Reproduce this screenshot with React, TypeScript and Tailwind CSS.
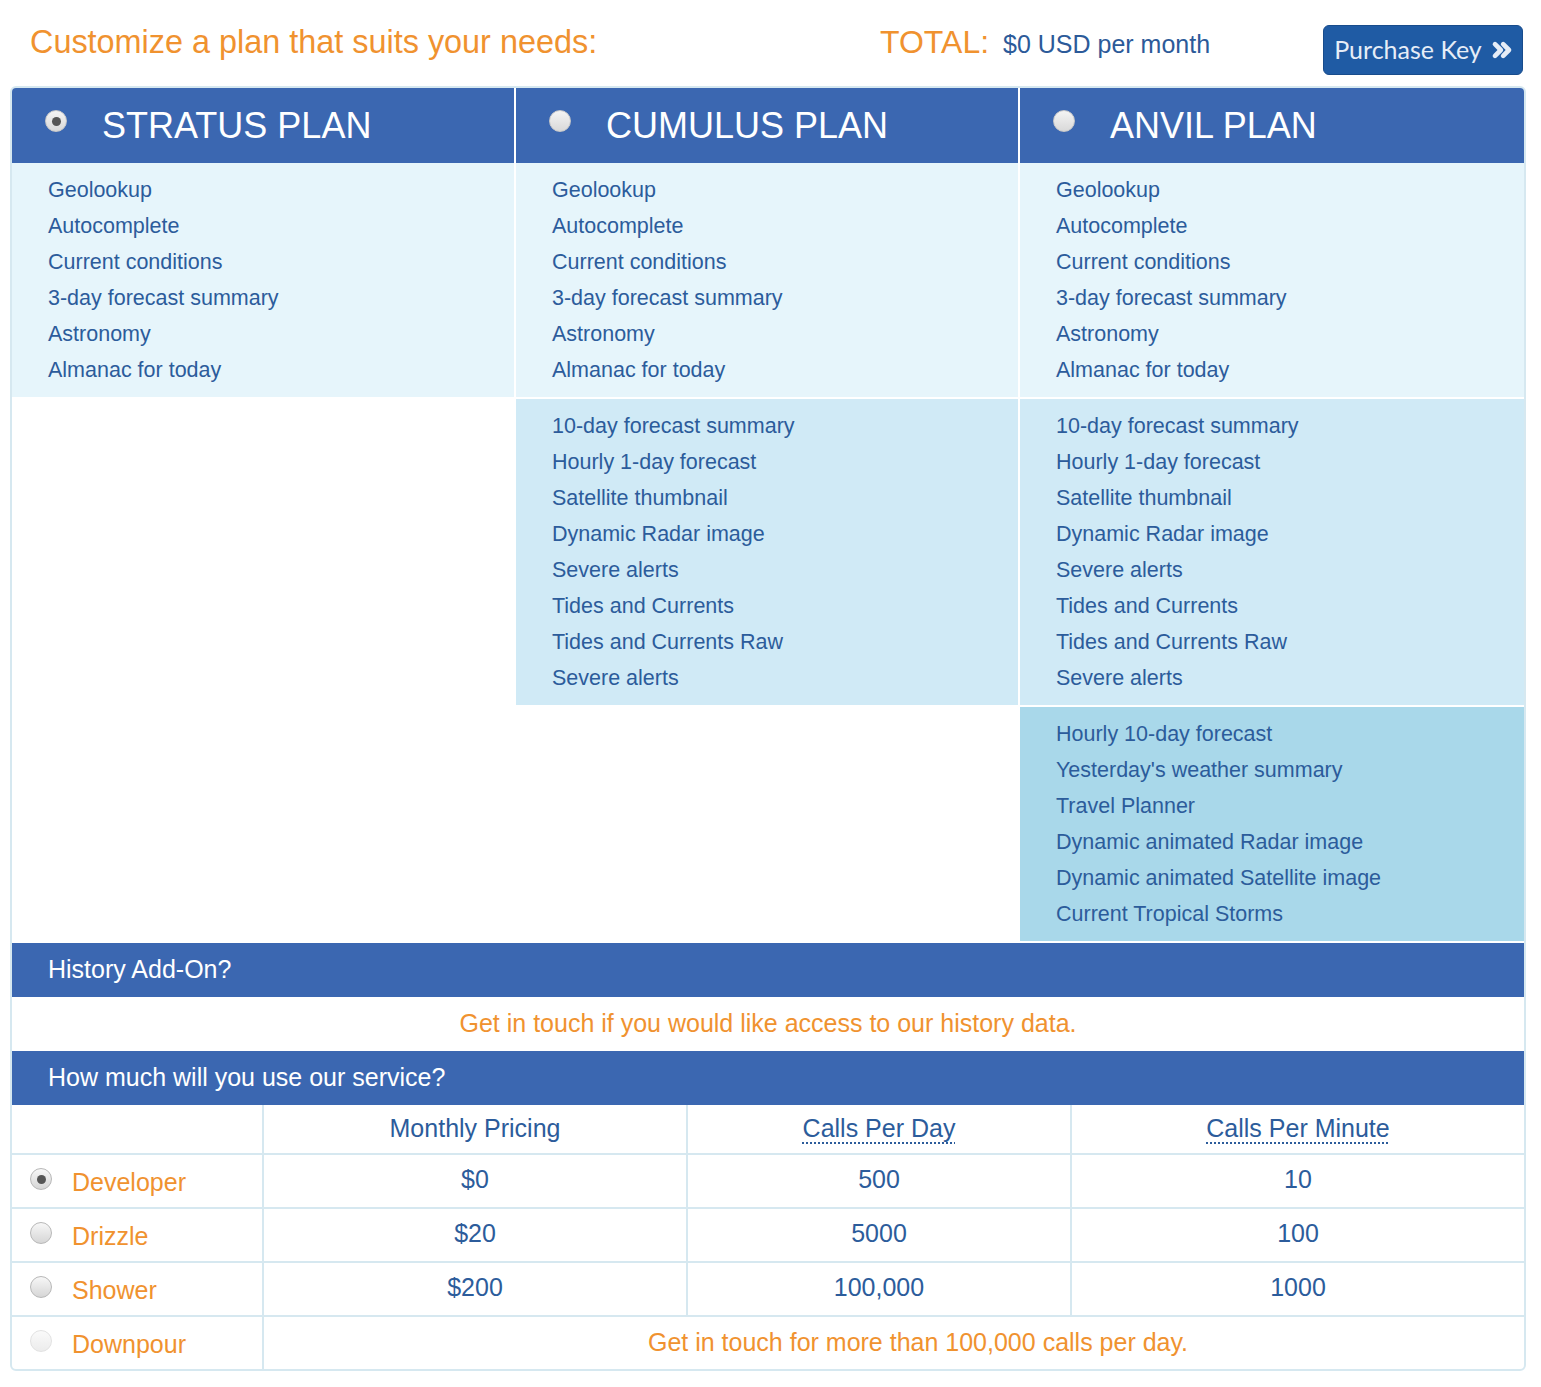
import { ChevronsRight } from 'lucide-react'

const basic = ['Geolookup', 'Autocomplete', 'Current conditions', '3-day forecast summary', 'Astronomy', 'Almanac for today']
const extra = [
    '10-day forecast summary',
    'Hourly 1-day forecast',
    'Satellite thumbnail',
    'Dynamic Radar image',
    'Severe alerts',
    'Tides and Currents',
    'Tides and Currents Raw',
    'Severe alerts',
]
const premium = [
    'Hourly 10-day forecast',
    "Yesterday's weather summary",
    'Travel Planner',
    'Dynamic animated Radar image',
    'Dynamic animated Satellite image',
    'Current Tropical Storms',
]

const plans = [
    { name: 'STRATUS PLAN', checked: true, sections: [basic] },
    { name: 'CUMULUS PLAN', checked: false, sections: [basic, extra] },
    { name: 'ANVIL PLAN', checked: false, sections: [basic, extra, premium] },
]

const sectionBg = ['bg-[#e6f5fb]', 'bg-[#d0eaf6]', 'bg-[#a9d8ea]']

const tiers = [
    { name: 'Developer', price: '$0', day: '500', minute: '10', checked: true },
    { name: 'Drizzle', price: '$20', day: '5000', minute: '100', checked: false },
    { name: 'Shower', price: '$200', day: '100,000', minute: '1000', checked: false },
]

function Radio({ checked = false, disabled = false, onBlue = false }: { checked?: boolean; disabled?: boolean; onBlue?: boolean }) {
    const base = disabled
        ? 'border-[#e2e2e2] bg-gradient-to-b from-[#fafafa] to-[#ececec]'
        : onBlue
            ? 'border-[#c9c9c9] bg-gradient-to-b from-[#f4f4f4] to-[#d9d9d9]'
            : 'border-[#b8b8b8] bg-gradient-to-b from-[#f7f7f7] to-[#d6d6d6]'
    return (
        <span className={`w-[22px] h-[22px] rounded-full border flex items-center justify-center shrink-0 ${base}`}>
            {checked && <span className="w-[9px] h-[9px] rounded-full bg-[#555]" />}
        </span>
    )
}

export default function App() {
    return (
        <div className="w-[1541px] bg-white font-['Liberation_Sans',Arial,sans-serif] text-[#2c5c9b]">
            {/* Top bar */}
            <div className="flex items-start h-[86px]">
                <div className="ml-[30px] w-[850px] mt-[24px] text-[32.4px] leading-[36px] text-[#f0922f]">
                    Customize a plan that suits your needs:
                </div>
                <div className="flex items-baseline mt-[24px]">
                    <span className="text-[32px] leading-[36px] text-[#f0922f]">TOTAL:</span>
                    <span className="ml-[14px] text-[25px] text-[#2c5a99]">$0 USD per month</span>
                </div>
                <button className="ml-auto mr-[18px] mt-[25px] w-[200px] h-[50px] rounded-[6px] bg-[#1f5ba4] border border-[#184c8c] flex items-center justify-center gap-[6px] text-[#e6edf7] font-['Lato',sans-serif] text-[25px]">
                    Purchase Key
                    <ChevronsRight size={28} strokeWidth={4} className="-mr-[4px]" />
                </button>
            </div>

            {/* Plans box */}
            <div className="ml-[10px] w-[1516px] border-2 border-[#d6e8f0] rounded-[6px] overflow-hidden">
                <div className="grid grid-cols-[502px_502px_504px] gap-x-[2px]">
                    {plans.map((p) => (
                        <div key={p.name} className="bg-[#3b67b1] h-[75px] flex items-center pl-[33px]">
                            <span className="mb-[9px]">
                                <Radio checked={p.checked} onBlue />
                            </span>
                            <span className="ml-[35px] text-[36px] leading-[36px] text-white">{p.name}</span>
                        </div>
                    ))}
                </div>

                <div className="grid grid-cols-[502px_502px_504px] gap-x-[2px] items-start">
                    {plans.map((p) => (
                        <div key={p.name} className="flex flex-col gap-y-[2px]">
                            {p.sections.map((items, i) => (
                                <ul key={i} className={`${sectionBg[i]} py-[9px] pl-[36px]`}>
                                    {items.map((f, j) => (
                                        <li key={j} className="text-[21.5px] leading-[36px]">{f}</li>
                                    ))}
                                </ul>
                            ))}
                        </div>
                    ))}
                </div>

                {/* History */}
                <div className="mt-[2px] h-[54px] bg-[#3b67b1] flex items-center pl-[36px] text-[25px] text-white">
                    History Add-On?
                </div>
                <div className="h-[54px] flex items-center justify-center text-[25px] text-[#f0922f]">
                    Get in touch if you would like access to our history data.
                </div>

                {/* Usage */}
                <div className="h-[54px] bg-[#3b67b1] flex items-center pl-[36px] text-[25px] text-white">
                    How much will you use our service?
                </div>
                <div className="grid grid-cols-[250px_424px_384px_454px] text-[25px]">
                    <div className="h-[48px]" />
                    <div className="h-[48px] border-l-2 border-[#d6e8f0] flex items-center justify-center">Monthly Pricing</div>
                    <div className="h-[48px] border-l-2 border-[#d6e8f0] flex items-center justify-center">
                        <span className="underline decoration-dotted decoration-2 underline-offset-[5px]">Calls Per Day</span>
                    </div>
                    <div className="h-[48px] border-l-2 border-[#d6e8f0] flex items-center justify-center">
                        <span className="underline decoration-dotted decoration-2 underline-offset-[5px]">Calls Per Minute</span>
                    </div>

                    {tiers.map((t) => (
                        <div key={t.name} className="contents">
                            <div className="h-[54px] border-t-2 border-[#d6e8f0] flex items-center pl-[18px]">
                                <span className="mb-[4px]"><Radio checked={t.checked} /></span>
                                <span className="ml-[20px] mt-[4px] text-[#f0922f]">{t.name}</span>
                            </div>
                            <div className="h-[54px] pb-[2px] border-t-2 border-l-2 border-[#d6e8f0] flex items-center justify-center">{t.price}</div>
                            <div className="h-[54px] pb-[2px] border-t-2 border-l-2 border-[#d6e8f0] flex items-center justify-center">{t.day}</div>
                            <div className="h-[54px] pb-[2px] border-t-2 border-l-2 border-[#d6e8f0] flex items-center justify-center">{t.minute}</div>
                        </div>
                    ))}

                    <div className="h-[54px] border-t-2 border-[#d6e8f0] flex items-center pl-[18px]">
                        <span className="mb-[4px]"><Radio disabled /></span>
                        <span className="ml-[20px] mt-[4px] text-[#f0922f]">Downpour</span>
                    </div>
                    <div className="col-span-3 h-[54px] border-t-2 border-l-2 border-[#d6e8f0] flex items-center justify-center pl-[48px] text-[#f0922f]">
                        Get in touch for more than 100,000 calls per day.
                    </div>
                </div>
            </div>
        </div>
    )
}
